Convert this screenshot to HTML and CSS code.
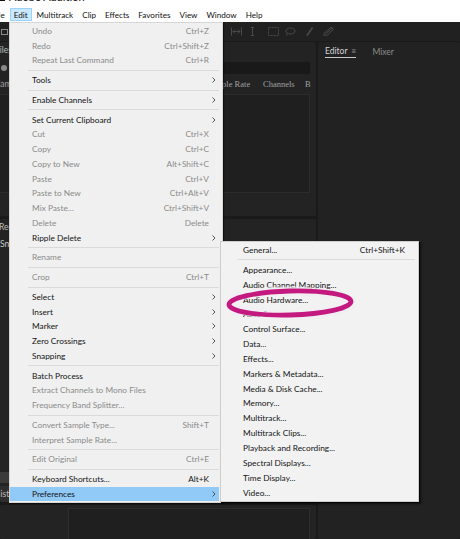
FILE: index.html
```html
<!DOCTYPE html>
<html>
<head>
<meta charset="utf-8">
<title>Adobe Audition</title>
<link rel="stylesheet" href="styles.css">
</head>
<body>
<div class="app">
  <div class="titlebar"><span class="title"><span class="app-ico"></span>Adobe Audition</span></div>
  <nav class="menubar">
    <span class="mb-item file">File</span>
    <span class="mb-item active">Edit</span>
    <span class="mb-item">Multitrack</span>
    <span class="mb-item">Clip</span>
    <span class="mb-item">Effects</span>
    <span class="mb-item">Favorites</span>
    <span class="mb-item">View</span>
    <span class="mb-item">Window</span>
    <span class="mb-item">Help</span>
  </nav>
  <div class="workspace">
    <div class="toolbar">
      <span class="tb-left"></span>
      <div class="tools">
        <svg class="t-time" width="11" height="9" viewBox="0 0 11 9"><path d="M0.5 0.5v8M10.5 0.5v8M2 4.5h7M2 4.5l2-2M2 4.5l2 2M9 4.5l-2-2M9 4.5l-2 2"/></svg>
        <svg class="t-sel" width="5" height="9" viewBox="0 0 5 9"><path d="M1 0.5h3M2.5 0.5v8M1 8.5h3"/></svg>
        <svg class="t-rect" width="11" height="9" viewBox="0 0 11 9"><rect x="0.5" y="0.5" width="10" height="8" stroke-dasharray="2 1"/></svg>
        <svg class="t-lasso" width="11" height="9" viewBox="0 0 11 9"><path d="M5.5 1C2.5 1 0.8 2.5 0.8 4S2.5 7 5.5 7 10 5.5 10 4 8.5 1 5.5 1zM2.5 6.5L1.5 8.5"/></svg>
        <svg class="t-brush" width="7" height="9" viewBox="0 0 7 9"><path d="M6.5 0.5L1 8.5" stroke-width="1.6"/></svg>
        <svg class="t-pencil" width="11" height="9" viewBox="0 0 11 9"><path d="M9.5 0.8L2 7.5M8 0.2l2.5 2L3.5 8.8 1 8.8 1 6.5z"/></svg>
      </div>
    </div>
    <div class="panels">
      <div class="col-left">
        <section class="panel files">
          <div class="p-head"><span class="tab cut5">Files</span></div>
          <div class="search-row"><span class="s-ico"></span><div class="search"></div></div>
          <div class="col-heads">
            <span class="c-name">Name</span>
            <span class="c-rate">Sample Rate</span>
            <span class="c-ch">Channels</span>
            <span class="c-bits">Bits</span>
          </div>
          <div class="file-list"></div>
          <div class="p-foot"></div>
        </section>
        <section class="panel media">
          <div class="p-head"><span class="tab cut1">Recent</span></div>
          <div class="m-row">Sn_</div>
          <div class="m-grow"></div>
          <div class="m-band"></div>
          <div class="p-head hist"><span class="tab cut6">History</span></div>
        </section>
        <section class="panel lower"><div class="inner-box"></div></section>
      </div>
      <section class="panel editor">
        <div class="ed-head">
          <span class="ed-tab active">Editor <span class="hamb">&#8801;</span></span>
          <span class="ed-tab">Mixer</span>
        </div>
      </section>
    </div>
  </div>

  <div class="menu edit-menu">
    <div class="mi dis"><span class="lb">Undo</span><span class="sc">Ctrl+Z</span><span class="ar"></span></div>
    <div class="mi dis"><span class="lb">Redo</span><span class="sc">Ctrl+Shift+Z</span><span class="ar"></span></div>
    <div class="mi dis"><span class="lb">Repeat Last Command</span><span class="sc">Ctrl+R</span><span class="ar"></span></div>
    <div class="sep"></div>
    <div class="mi"><span class="lb">Tools</span><span class="sc"></span><span class="ar"><svg width="4" height="6" viewBox="0 0 4 6"><path d="M0.5 0.5L3 3 0.5 5.5"/></svg></span></div>
    <div class="sep"></div>
    <div class="mi"><span class="lb">Enable Channels</span><span class="sc"></span><span class="ar"><svg width="4" height="6" viewBox="0 0 4 6"><path d="M0.5 0.5L3 3 0.5 5.5"/></svg></span></div>
    <div class="sep"></div>
    <div class="mi"><span class="lb">Set Current Clipboard</span><span class="sc"></span><span class="ar"><svg width="4" height="6" viewBox="0 0 4 6"><path d="M0.5 0.5L3 3 0.5 5.5"/></svg></span></div>
    <div class="mi dis"><span class="lb">Cut</span><span class="sc">Ctrl+X</span><span class="ar"></span></div>
    <div class="mi dis"><span class="lb">Copy</span><span class="sc">Ctrl+C</span><span class="ar"></span></div>
    <div class="mi dis"><span class="lb">Copy to New</span><span class="sc">Alt+Shift+C</span><span class="ar"></span></div>
    <div class="mi dis"><span class="lb">Paste</span><span class="sc">Ctrl+V</span><span class="ar"></span></div>
    <div class="mi dis"><span class="lb">Paste to New</span><span class="sc">Ctrl+Alt+V</span><span class="ar"></span></div>
    <div class="mi dis"><span class="lb">Mix Paste...</span><span class="sc">Ctrl+Shift+V</span><span class="ar"></span></div>
    <div class="mi dis"><span class="lb">Delete</span><span class="sc">Delete</span><span class="ar"></span></div>
    <div class="mi"><span class="lb">Ripple Delete</span><span class="sc"></span><span class="ar"><svg width="4" height="6" viewBox="0 0 4 6"><path d="M0.5 0.5L3 3 0.5 5.5"/></svg></span></div>
    <div class="sep"></div>
    <div class="mi dis"><span class="lb">Rename</span><span class="sc"></span><span class="ar"></span></div>
    <div class="sep"></div>
    <div class="mi dis"><span class="lb">Crop</span><span class="sc">Ctrl+T</span><span class="ar"></span></div>
    <div class="sep"></div>
    <div class="mi"><span class="lb">Select</span><span class="sc"></span><span class="ar"><svg width="4" height="6" viewBox="0 0 4 6"><path d="M0.5 0.5L3 3 0.5 5.5"/></svg></span></div>
    <div class="mi"><span class="lb">Insert</span><span class="sc"></span><span class="ar"><svg width="4" height="6" viewBox="0 0 4 6"><path d="M0.5 0.5L3 3 0.5 5.5"/></svg></span></div>
    <div class="mi"><span class="lb">Marker</span><span class="sc"></span><span class="ar"><svg width="4" height="6" viewBox="0 0 4 6"><path d="M0.5 0.5L3 3 0.5 5.5"/></svg></span></div>
    <div class="mi"><span class="lb">Zero Crossings</span><span class="sc"></span><span class="ar"><svg width="4" height="6" viewBox="0 0 4 6"><path d="M0.5 0.5L3 3 0.5 5.5"/></svg></span></div>
    <div class="mi"><span class="lb">Snapping</span><span class="sc"></span><span class="ar"><svg width="4" height="6" viewBox="0 0 4 6"><path d="M0.5 0.5L3 3 0.5 5.5"/></svg></span></div>
    <div class="sep"></div>
    <div class="mi"><span class="lb">Batch Process</span><span class="sc"></span><span class="ar"></span></div>
    <div class="mi dis"><span class="lb">Extract Channels to Mono Files</span><span class="sc"></span><span class="ar"></span></div>
    <div class="mi dis"><span class="lb">Frequency Band Splitter...</span><span class="sc"></span><span class="ar"></span></div>
    <div class="sep"></div>
    <div class="mi dis"><span class="lb">Convert Sample Type...</span><span class="sc">Shift+T</span><span class="ar"></span></div>
    <div class="mi dis"><span class="lb">Interpret Sample Rate...</span><span class="sc"></span><span class="ar"></span></div>
    <div class="sep"></div>
    <div class="mi dis"><span class="lb">Edit Original</span><span class="sc">Ctrl+E</span><span class="ar"></span></div>
    <div class="sep"></div>
    <div class="mi"><span class="lb">Keyboard Shortcuts...</span><span class="sc">Alt+K</span><span class="ar"></span></div>
    <div class="mi hl"><span class="lb">Preferences</span><span class="sc"></span><span class="ar"><svg width="4" height="6" viewBox="0 0 4 6"><path d="M0.5 0.5L3 3 0.5 5.5"/></svg></span></div>
  </div>

  <div class="menu sub-menu">
    <div class="mi"><span class="lb">General...</span><span class="sc">Ctrl+Shift+K</span></div>
    <div class="sep"></div>
    <div class="mi"><span class="lb">Appearance...</span></div>
    <div class="mi"><span class="lb">Audio Channel Mapping...</span></div>
    <div class="mi"><span class="lb">Audio Hardware...</span></div>
    <div class="mi"><span class="lb">Auto Save...</span></div>
    <div class="mi"><span class="lb">Control Surface...</span></div>
    <div class="mi"><span class="lb">Data...</span></div>
    <div class="mi"><span class="lb">Effects...</span></div>
    <div class="mi"><span class="lb">Markers &amp; Metadata...</span></div>
    <div class="mi"><span class="lb">Media &amp; Disk Cache...</span></div>
    <div class="mi"><span class="lb">Memory...</span></div>
    <div class="mi"><span class="lb">Multitrack...</span></div>
    <div class="mi"><span class="lb">Multitrack Clips...</span></div>
    <div class="mi"><span class="lb">Playback and Recording...</span></div>
    <div class="mi"><span class="lb">Spectral Displays...</span></div>
    <div class="mi"><span class="lb">Time Display...</span></div>
    <div class="mi"><span class="lb">Video...</span></div>
  </div>

  <svg class="circle-mark" width="134" height="36" viewBox="0 0 134 36">
    <ellipse cx="66" cy="18" rx="61" ry="12" fill="none" stroke="#f2eef2" stroke-width="9" opacity="0.7"/>
    <ellipse cx="66" cy="18" rx="61" ry="12" fill="none" stroke="#c41a80" stroke-width="4.8" transform="rotate(-1.5 66 18)"/>
  </svg>
</div>
</body>
</html>
```

FILE: styles.css
```css
* { box-sizing: border-box; }
html, body { margin: 0; padding: 0; }
body {
  width: 460px;
  height: 539px;
  overflow: hidden;
  background: #1b1b1b;
  font-family: Lato, "Liberation Sans", sans-serif;
}
.app {
  position: relative;
  width: 460px;
  height: 539px;
  overflow: hidden;
  display: flex;
  flex-direction: column;
}

/* title + menubar */
.titlebar {
  height: 7px;
  background: #fff;
  overflow: hidden;
}
.title {
  display: flex;
  align-items: center;
  gap: 4px;
  margin-top: -10px;
  height: 13px;
  font-size: 11px;
  color: #111;
}
.app-ico { width: 7px; height: 9px; background: #111; margin-left: -2px; }
.menubar {
  height: 15px;
  background: #fff;
  display: flex;
  align-items: center;
  gap: 1px;
  font-size: 8.1px;
  color: #111;
}
.mb-item {
  height: 13px;
  line-height: 12px;
  padding: 0 3px;
  border: 1px solid transparent;
  white-space: nowrap;
}
.mb-item.file { margin-left: -12px; }
.mb-item.active { background: #cce8ff; border-color: #99d1ff; }

/* workspace */
.workspace {
  flex: 1;
  display: flex;
  flex-direction: column;
  background: #1a1a1a;
}
.toolbar {
  height: 19px;
  background: #212121;
  display: flex;
  align-items: center;
}
.tb-left {
  width: 7px; height: 6px;
  margin-left: 1px;
  border: 1px solid #8a8a8a;
}
.tools {
  display: flex;
  align-items: center;
  margin-left: 223px;
}
.tools svg { fill: none; stroke: #4a4a4a; stroke-width: 1; }
.t-sel { margin-left: 8px; }
.t-rect { margin-left: 13px; }
.t-lasso { margin-left: 6px; }
.t-brush { margin-left: 10px; }
.t-pencil { margin-left: 10px; }

.panels {
  flex: 1;
  display: flex;
  gap: 2px;
  padding-top: 1px;
}
.col-left {
  width: 316px;
  display: flex;
  flex-direction: column;
  gap: 3px;
}
.panel {
  background: #232323;
  border-radius: 2px;
  overflow: hidden;
  color: #a8a8a8;
  font-size: 8.5px;
}
.p-head { height: 16px; display: flex; align-items: center; }
.tab { white-space: nowrap; color: #bdbdbd; }
.cut5 { margin-left: -5px; }
.cut1 { margin-left: -1px; }
.cut6 { margin-left: -6px; }

.files { height: 174px; display: flex; flex-direction: column; }
.search-row { height: 13px; display: flex; align-items: center; margin-top: 3px; }
.s-ico { width: 6px; height: 6px; border-radius: 50%; background: #8a8a8a; margin-left: 1px; }
.search { flex: 1; height: 12px; background: #191919; margin: 0 6px 0 12px; border-radius: 1px; }
.col-heads {
  height: 15px;
  display: flex;
  align-items: center;
  margin-top: 2px;
  white-space: nowrap;
  font-family: "Liberation Serif", serif;
  font-size: 8.5px;
  color: #a0a0a0;
}
.c-name { width: 213px; margin-left: -6px; font-family: Lato, sans-serif; }
.c-rate { width: 56px; }
.c-ch { width: 42px; }
.c-bits { width: 6px; overflow: hidden; }
.file-list {
  height: 99px;
  margin: 3px 6px 0 0;
  background: #1f1f1f;
  border: 1px solid #2c2c2c;
  border-left: none;
}
.p-foot { flex: 1; }

.media { flex: 1; display: flex; flex-direction: column; }
.m-row { height: 18px; line-height: 18px; color: #c8c8c8; white-space: nowrap; }
.m-grow { flex: 1; }
.m-band { height: 11px; background: #3b3b3b; margin-bottom: 3px; }
.hist { background: #2e2e2e; }
.lower { height: 34px; padding: 3px 6px 0 68px; }
.inner-box { height: 100%; border: 1px solid #2d2d2d; border-bottom: none; background: #1f1f1f; }

.editor { flex: 1; background: #222; }
.ed-head {
  height: 17px;
  display: flex;
  align-items: center;
  gap: 16px;
  padding-left: 7px;
  margin-top: 1px;
}
.ed-tab { color: #8c8c8c; font-size: 8.5px; white-space: nowrap; }
.ed-tab.active {
  color: #d4d4d4;
  padding-bottom: 1px;
  border-bottom: 1.5px solid #c9c9c9;
}
.hamb { color: #909090; margin-left: 2px; }

/* menus */
.menu {
  position: absolute;
  background: #f0f0f0;
  border: 1px solid #d6d6d6;
  font-size: 8.3px;
  color: #141414;
}
.edit-menu {
  left: 9px;
  top: 22px;
  width: 214px;
  padding: 0.6px 3px 1px 0;
  box-shadow: 1px 1px 1px rgba(0,0,0,0.5);
}
.sub-menu {
  left: 220px;
  top: 241px;
  width: 199px;
  padding: 0.6px 0 1px 0;
  background: #f2f2f2;
  border-color: #cdcdcd;
  box-shadow: 1px 1px 0 #050505, 2px 2px 2px rgba(0,0,0,0.6);
}
.mi {
  height: 14.75px;
  display: flex;
  align-items: center;
  padding-left: 22px;
  white-space: nowrap;
}
.mi .lb { flex: 1; }
.mi .sc { text-align: right; }
.mi .ar { width: 10px; display: flex; justify-content: center; align-items: center; }
.mi .ar svg { fill: none; stroke: #444; stroke-width: 0.9; }
.mi.dis { color: #8b8b8b; }
.mi.hl { background: #91c9f7; }
.sub-menu .mi { height: 14.85px; padding-right: 13px; }
.sep {
  height: 5px;
  display: flex;
  align-items: center;
  padding-left: 18px;
}
.sep::before {
  content: "";
  flex: 1;
  height: 1px;
  background: #dadada;
}
.sub-menu .sep { padding-left: 17px; padding-right: 3px; }

.circle-mark {
  position: absolute;
  left: 224px;
  top: 285px;
}
```
